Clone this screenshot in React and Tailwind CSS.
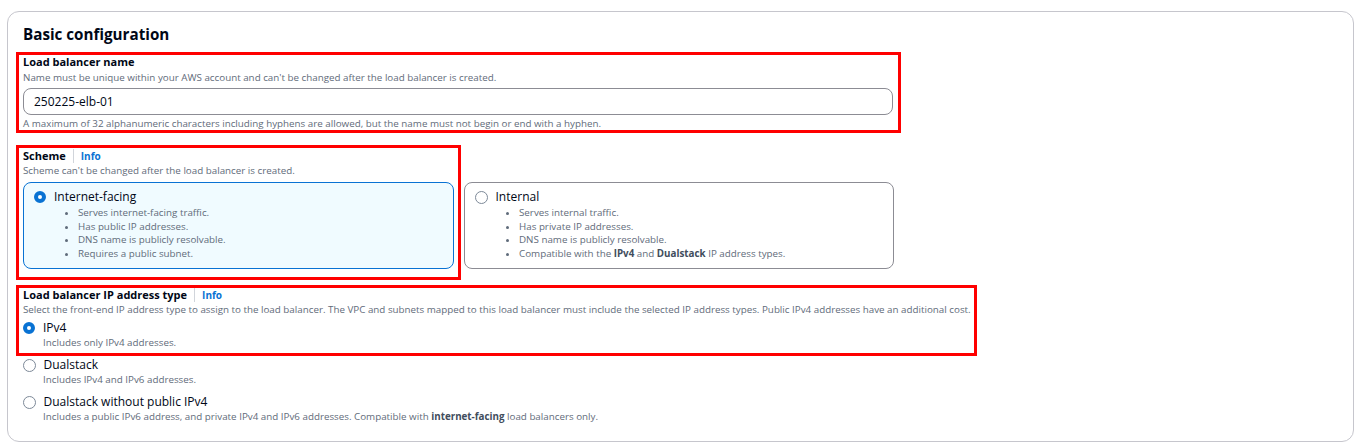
import { useState } from 'react'

const FONT = '"Open Sans", "Noto Sans", Arial, sans-serif'

function RedFrame({ className }) {
  return <div className={`pointer-events-none absolute border-[3px] border-[#ff0000] ${className}`} />
}

function Radio({ checked }) {
  if (checked) {
    return <span className="inline-block w-[12px] h-[12px] rounded-full border-[4px] border-[#0972d3] bg-white shrink-0" />
  }
  return <span className="inline-block w-[13px] h-[13px] rounded-full border-[1.5px] border-[#7d8998] bg-white shrink-0 -ml-[0.5px]" />
}

function FieldLabel({ children, info }) {
  return (
    <div className="flex items-center h-[14px] text-[11px] leading-[14px] font-bold text-[#000716]">
      <span>{children}</span>
      {info && (
        <>
          <span className="mx-[7px] w-px h-[14px] bg-[#d1d5db]" />
          <span className="text-[10px] text-[#0972d3]">Info</span>
        </>
      )}
    </div>
  )
}

function Hint({ children, className = '' }) {
  return <p className={`text-[9.8px] leading-[14px] text-[#5f6b7a] ${className}`}>{children}</p>
}

const SCHEMES = [
  {
    id: 'internet-facing',
    label: 'Internet-facing',
    bullets: [
      'Serves internet-facing traffic.',
      'Has public IP addresses.',
      'DNS name is publicly resolvable.',
      'Requires a public subnet.',
    ],
  },
  {
    id: 'internal',
    label: 'Internal',
    bullets: [
      'Serves internal traffic.',
      'Has private IP addresses.',
      'DNS name is publicly resolvable.',
      <>Compatible with the <b className="text-[#414d5c]">IPv4</b> and <b className="text-[#414d5c]">Dualstack</b> IP address types.</>,
    ],
  },
]

const IP_TYPES = [
  { id: 'ipv4', label: 'IPv4', desc: 'Includes only IPv4 addresses.' },
  { id: 'dualstack', label: 'Dualstack', desc: 'Includes IPv4 and IPv6 addresses.' },
  {
    id: 'dualstack-no-ipv4',
    label: 'Dualstack without public IPv4',
    desc: <>Includes a public IPv6 address, and private IPv4 and IPv6 addresses. Compatible with <b className="text-[#414d5c]">internet-facing</b> load balancers only.</>,
  },
]

export default function App() {
  const [scheme, setScheme] = useState('internet-facing')
  const [ipType, setIpType] = useState('ipv4')

  return (
    <div className="w-[1361px] h-[444px] bg-white pt-[11px] px-[7px] overflow-hidden" style={{ fontFamily: FONT }}>
      <div className="h-[431px] rounded-[12px] border border-[#c6c6cd] px-[15px] pt-[12px]">
        <h2 className="text-[15.2px] leading-[20px] font-bold text-[#000716]">Basic configuration</h2>

        {/* Load balancer name */}
        <div className="relative mt-[11px] w-[870px]">
          <RedFrame className="-left-[7px] -top-[3px] w-[885px] h-[81px]" />
          <FieldLabel>Load balancer name</FieldLabel>
          <Hint className="mt-[2px]">Name must be unique within your AWS account and can't be changed after the load balancer is created.</Hint>
          <input
            defaultValue="250225-elb-01"
            className="mt-[3px] w-full h-[27px] rounded-[8px] border border-[#8c8c94] px-[10px] text-[12px] text-[#000716] outline-none"
          />
          <Hint className="mt-[2px]">A maximum of 32 alphanumeric characters including hyphens are allowed, but the name must not begin or end with a hyphen.</Hint>
        </div>

        {/* Scheme */}
        <div className="relative mt-[18px]">
          <RedFrame className="-left-[7px] -top-[4px] w-[445px] h-[135px]" />
          <FieldLabel info>Scheme</FieldLabel>
          <Hint className="mt-[1px]">Scheme can't be changed after the load balancer is created.</Hint>
          <div className="mt-[4px] flex gap-[10px]">
            {SCHEMES.map(s => {
              const on = scheme === s.id
              return (
                <div
                  key={s.id}
                  onClick={() => setScheme(s.id)}
                  className={`h-[87px] rounded-[8px] border pl-[10px] pt-[6px] cursor-pointer ${on ? 'w-[431px] border-[#0972d3] bg-[#f0fbff]' : 'w-[430px] border-[#8c8c94] bg-white'}`}
                >
                  <div className="flex items-center gap-[8px] h-[16px]">
                    <Radio checked={on} />
                    <span className="text-[12px] leading-[16px] text-[#000716]">{s.label}</span>
                  </div>
                  <ul className="ml-[20px] pl-[24px] mt-[1px] list-disc text-[9.8px] leading-[13.5px] text-[#5f6b7a] marker:text-[#5f6b7a]">
                    {s.bullets.map((b, i) => (
                      <li key={i}>{b}</li>
                    ))}
                  </ul>
                </div>
              )
            })}
          </div>
        </div>

        {/* IP address type */}
        <div className="relative mt-[19px]">
          <RedFrame className="-left-[7px] -top-[3px] w-[961px] h-[71px]" />
          <FieldLabel info>Load balancer IP address type</FieldLabel>
          <Hint className="mt-[1px]">Select the front-end IP address type to assign to the load balancer. The VPC and subnets mapped to this load balancer must include the selected IP address types. Public IPv4 addresses have an additional cost.</Hint>
          <div className="mt-[3px] flex flex-col gap-[7px]">
            {IP_TYPES.map(t => (
              <div key={t.id} onClick={() => setIpType(t.id)} className="cursor-pointer">
                <div className="flex items-center gap-[8px] h-[16px]">
                  <Radio checked={ipType === t.id} />
                  <span className="text-[12px] leading-[16px] text-[#000716]">{t.label}</span>
                </div>
                <Hint className="pl-[20px]">{t.desc}</Hint>
              </div>
            ))}
          </div>
        </div>
      </div>
    </div>
  )
}
